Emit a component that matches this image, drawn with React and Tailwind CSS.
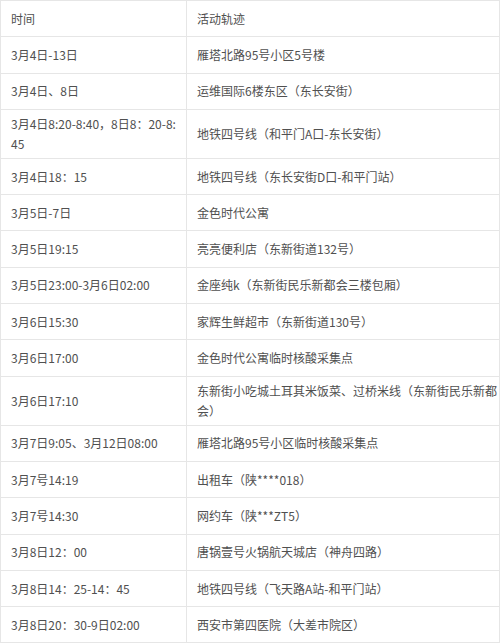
import React from "react";

const rows = [
  ["3月4日-13日", "雁塔北路95号小区5号楼"],
  ["3月4日、8日", "运维国际6楼东区（东长安街）"],
  ["3月4日8:20-8:40，8日8：20-8:45", "地铁四号线（和平门A口-东长安街）"],
  ["3月4日18：15", "地铁四号线（东长安街D口-和平门站）"],
  ["3月5日-7日", "金色时代公寓"],
  ["3月5日19:15", "亮亮便利店（东新街道132号）"],
  ["3月5日23:00-3月6日02:00", "金座纯k（东新街民乐新都会三楼包厢）"],
  ["3月6日15:30", "家辉生鲜超市（东新街道130号）"],
  ["3月6日17:00", "金色时代公寓临时核酸采集点"],
  ["3月6日17:10", "东新街小吃城土耳其米饭菜、过桥米线（东新街民乐新都会）"],
  ["3月7日9:05、3月12日08:00", "雁塔北路95号小区临时核酸采集点"],
  ["3月7号14:19", "出租车（陕****018）"],
  ["3月7号14:30", "网约车（陕***ZT5）"],
  ["3月8日12：00", "唐锅壹号火锅航天城店（神舟四路）"],
  ["3月8日14：25-14：45", "地铁四号线（飞天路A站-和平门站）"],
  ["3月8日20：30-9日02:00", "西安市第四医院（大差市院区）"],
];

const cell =
  "border border-[#e6e6e6] h-[36.3px] pl-[10px] py-[4px] align-middle text-left font-normal";

export default function App() {
  return (
    <div
      className="w-[500px] bg-white text-[12px] leading-[20px] text-[#505050]"
      style={{ fontFamily: '"Noto Sans CJK SC", "Noto Sans", sans-serif' }}
    >
      <table className="w-[500px] border-collapse table-fixed">
        <colgroup>
          <col className="w-[186px]" />
          <col />
        </colgroup>
        <thead>
          <tr>
            <th className={cell + " pr-[5px]"}>时间</th>
            <th className={cell + " pr-[1px]"}>活动轨迹</th>
          </tr>
        </thead>
        <tbody>
          {rows.map(([time, place]) => (
            <tr key={time}>
              <td className={cell + " pr-[5px] break-all"}>{time}</td>
              <td className={cell + " pr-[1px]"}>{place}</td>
            </tr>
          ))}
        </tbody>
      </table>
    </div>
  );
}
